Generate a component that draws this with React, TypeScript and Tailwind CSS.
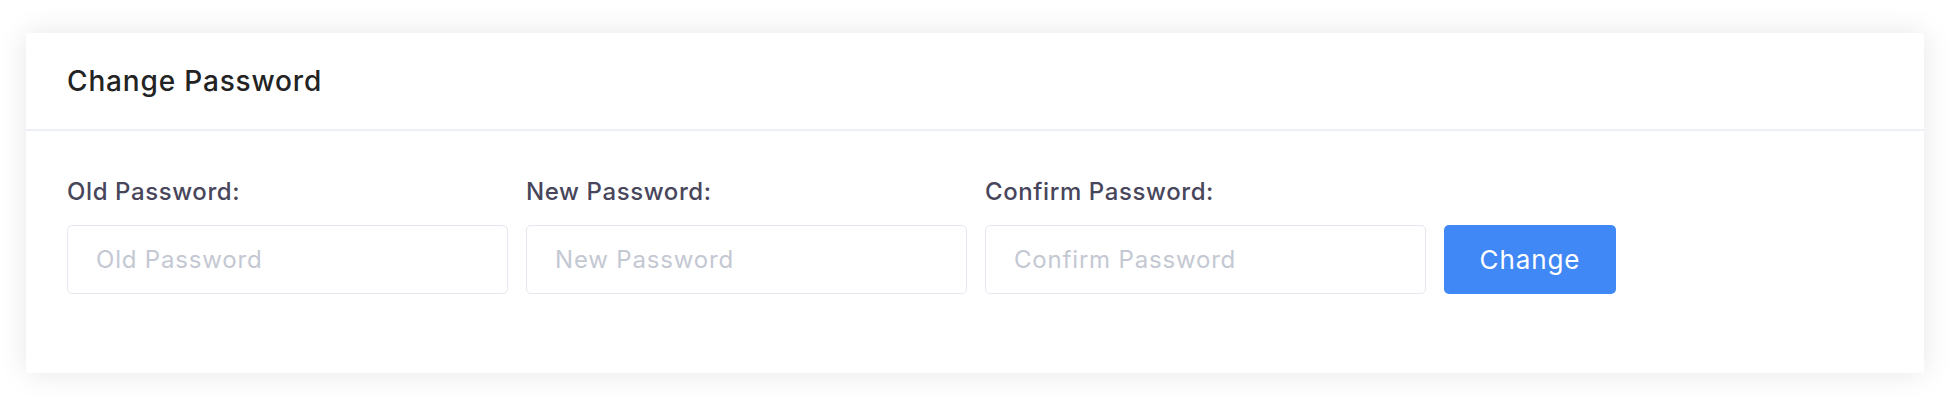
import React from "react";

const fields = [
  { label: "Old Password:", placeholder: "Old Password" },
  { label: "New Password:", placeholder: "New Password" },
  { label: "Confirm Password:", placeholder: "Confirm Password" },
];

const PasswordField = ({ label, placeholder }: { label: string; placeholder: string }) => (
  <div className="w-[441px] flex flex-col">
    <label className="text-[24px] leading-[34px] tracking-[0.025em] font-medium text-[#48465b] mb-[16px]">
      {label}
    </label>
    <input
      type="password"
      placeholder={placeholder}
      className="h-[69px] w-full rounded-[5px] border border-[#e4e8f0] bg-white px-[28px] text-[24px] tracking-[0.034em] text-[#48465b] outline-none placeholder:text-[#c4c8d3]"
    />
  </div>
);

export default function App() {
  return (
    <div className="h-[406px] w-full bg-white px-[26px] pt-[33px] font-['Inter','Noto_Sans',sans-serif]">
      <div className="rounded-[3px] bg-white shadow-[0_0_30px_0_rgba(0,0,0,0.1)]">
        {/* header */}
        <div className="h-[98px] flex items-center px-[41px] border-b-2 border-[#edf0f6]">
          <h3 className="text-[28px] tracking-[0.03em] font-medium text-[#232323]">Change Password</h3>
        </div>
        {/* form */}
        <div className="px-[41px] pt-[44px] pb-[79px]">
          <div className="flex items-end gap-[18px]">
            {fields.map((f) => (
              <PasswordField key={f.label} label={f.label} placeholder={f.placeholder} />
            ))}
            <button className="w-[172px] h-[69px] rounded-[5px] bg-[#3f88f5] text-white text-[26px] tracking-[0.035em]">
              Change
            </button>
          </div>
        </div>
      </div>
    </div>
  );
}
